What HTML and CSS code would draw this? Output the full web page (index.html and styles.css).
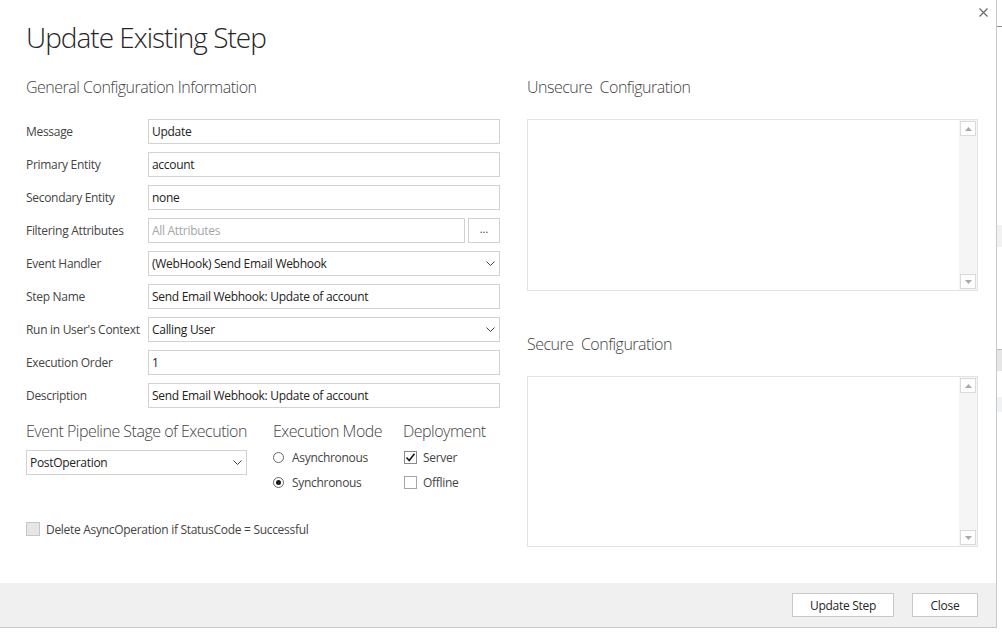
FILE: index.html
```html
<!DOCTYPE html>
<html lang="en">
<head>
<meta charset="UTF-8">
<title>Update Existing Step</title>
<link rel="stylesheet" href="styles.css">
</head>
<body>
<div class="page">
    <div class="dialog">
        <div class="dialog-head">
            <h1 class="title">Update Existing Step</h1>
            <button class="close-x" type="button" title="Close">
                <svg width="9" height="9" viewBox="0 0 9 9"><path d="M0.5 0.5L8.5 8.5M8.5 0.5L0.5 8.5" stroke="#6a6a6a" stroke-width="1.2" fill="none"/></svg>
            </button>
        </div>

        <div class="dialog-body">
            <div class="col-left">
                <h2 class="section">General Configuration Information</h2>

                <div class="row"><label>Message</label><input class="field" type="text" value="Update"></div>
                <div class="row"><label>Primary Entity</label><input class="field" type="text" value="account"></div>
                <div class="row"><label>Secondary Entity</label><input class="field" type="text" value="none"></div>
                <div class="row">
                    <label>Filtering Attributes</label>
                    <input class="field" type="text" placeholder="All Attributes">
                    <button class="dots" type="button">...</button>
                </div>
                <div class="row">
                    <label>Event Handler</label>
                    <div class="field select"><span>(WebHook) Send Email Webhook</span>
                        <svg width="9" height="5" viewBox="0 0 9 5"><path d="M0.5 0.5L4.5 4.5L8.5 0.5" stroke="#444" fill="none"/></svg>
                    </div>
                </div>
                <div class="row"><label>Step Name</label><input class="field" type="text" value="Send Email Webhook: Update of account"></div>
                <div class="row">
                    <label>Run in User's Context</label>
                    <div class="field select"><span>Calling User</span>
                        <svg width="9" height="5" viewBox="0 0 9 5"><path d="M0.5 0.5L4.5 4.5L8.5 0.5" stroke="#444" fill="none"/></svg>
                    </div>
                </div>
                <div class="row"><label>Execution Order</label><input class="field" type="text" value="1"></div>
                <div class="row"><label>Description</label><input class="field" type="text" value="Send Email Webhook: Update of account"></div>

                <div class="stage">
                    <div>
                        <h3 class="sub">Event Pipeline Stage of Execution</h3>
                        <div class="field select stage-select"><span>PostOperation</span>
                            <svg width="9" height="5" viewBox="0 0 9 5"><path d="M0.5 0.5L4.5 4.5L8.5 0.5" stroke="#444" fill="none"/></svg>
                        </div>
                    </div>
                    <div>
                        <h3 class="sub">Execution Mode</h3>
                        <div class="opts">
                            <div class="opt"><span class="radio"></span>Asynchronous</div>
                            <div class="opt"><span class="radio on"></span>Synchronous</div>
                        </div>
                    </div>
                    <div>
                        <h3 class="sub">Deployment</h3>
                        <div class="opts">
                            <div class="opt"><span class="check">
                                <svg width="11" height="11" viewBox="0 0 11 11"><path d="M1.5 5.5L4.2 8.5L9.5 1.8" stroke="#1a1a1a" stroke-width="1.6" fill="none"/></svg>
                            </span>Server</div>
                            <div class="opt"><span class="check off"></span>Offline</div>
                        </div>
                    </div>
                </div>

                <div class="delete-row"><span class="check disabled"></span>Delete AsyncOperation if StatusCode = Successful</div>
            </div>

            <div class="col-right">
                <h2 class="section">Unsecure&nbsp; Configuration</h2>
                <div class="config-box">
                    <textarea class="config-text"></textarea>
                    <div class="scroll">
                        <span class="scroll-btn"><svg width="7" height="4" viewBox="0 0 7 4"><path d="M0 4L3.5 0L7 4Z" fill="#a9a9a9"/></svg></span>
                        <span class="scroll-btn"><svg width="7" height="4" viewBox="0 0 7 4"><path d="M0 0L3.5 4L7 0Z" fill="#a9a9a9"/></svg></span>
                    </div>
                </div>

                <h2 class="section secure">Secure&nbsp; Configuration</h2>
                <div class="config-box short">
                    <textarea class="config-text"></textarea>
                    <div class="scroll">
                        <span class="scroll-btn"><svg width="7" height="4" viewBox="0 0 7 4"><path d="M0 4L3.5 0L7 4Z" fill="#a9a9a9"/></svg></span>
                        <span class="scroll-btn"><svg width="7" height="4" viewBox="0 0 7 4"><path d="M0 0L3.5 4L7 0Z" fill="#a9a9a9"/></svg></span>
                    </div>
                </div>
            </div>
        </div>

        <div class="dialog-foot">
            <button class="btn btn-update" type="button">Update Step</button>
            <button class="btn btn-close" type="button">Close</button>
        </div>
    </div>

    <!-- bit of the page behind the dialog -->
    <div class="edge">
        <div class="edge-tick"></div>
        <div class="edge-block"></div>
        <div class="edge-line"></div>
        <div class="edge-dark"></div>
        <div class="edge-light"></div>
    </div>
</div>
</body>
</html>
```

FILE: styles.css
```css
body {
    margin: 0;
    font-family: "Open Sans", "Segoe UI", sans-serif;
    letter-spacing: -0.3px;
    color: #444;
    background-color: #fff;
}

.page {
    display: flex;
    height: 634px;
}

.dialog {
    width: 997px;
    height: 628px;
    box-sizing: border-box;
    border-right: 1px solid #c8c8c8;
    border-bottom: 1px solid #c8c8c8;
    display: flex;
    flex-direction: column;
}

.dialog-head {
    display: flex;
    justify-content: space-between;
    padding: 0 8px 0 26px;
}

.title {
    margin: 19px 0 0;
    font-size: 28px;
    font-weight: 300;
    line-height: 36px;
    letter-spacing: -1px;
    color: #262626;
}

.close-x {
    margin-top: 8px;
    width: 9px;
    height: 9px;
    padding: 0;
    border: none;
    background: none;
    line-height: 0;
}

.dialog-body {
    flex: 1;
    display: flex;
    gap: 27px;
    padding: 21px 18px 0 26px;
}

.col-left {
    width: 474px;
}

.col-right {
    width: 451px;
}

.section {
    margin: 0 0 21px;
    font-size: 16px;
    font-weight: 300;
    line-height: 22px;
    letter-spacing: -0.5px;
    color: #444;
}

.section.secure {
    margin-top: 42px;
}

/* form rows */
.row {
    display: flex;
    align-items: center;
    height: 25px;
    margin-bottom: 8px;
}

.row label {
    width: 122px;
    flex-shrink: 0;
    font-size: 12px;
    color: #444;
}

.field {
    flex: 1;
    min-width: 0;
    height: 25px;
    box-sizing: border-box;
    margin: 0;
    padding: 0 3px 1px;
    border: 1px solid #d2d2d2;
    font-family: inherit;
    font-size: 12px;
    letter-spacing: -0.3px;
    color: #222;
    background-color: #fff;
    outline: none;
}

.field::placeholder {
    color: #a6a6a6;
}

.dots {
    width: 32px;
    height: 25px;
    margin-left: 3px;
    padding: 0 0 4px;
    border: 1px solid #d2d2d2;
    background-color: #fff;
    font-family: inherit;
    font-size: 11px;
    color: #444;
}

.select {
    display: flex;
    align-items: center;
    justify-content: space-between;
    padding-right: 4px;
}

/* stage / mode / deployment */
.stage {
    display: grid;
    grid-template-columns: 247px 130px 1fr;
    margin-top: 12px;
}

.sub {
    margin: 0;
    font-size: 16px;
    font-weight: 300;
    line-height: 22px;
    letter-spacing: -0.5px;
    color: #444;
}

.stage-select {
    width: 221px;
    flex: none;
    margin-top: 8px;
}

.opts {
    margin-top: 3px;
}

.opt {
    display: flex;
    align-items: center;
    height: 25px;
    font-size: 12px;
    color: #444;
}

.radio {
    width: 11px;
    height: 11px;
    box-sizing: border-box;
    margin-right: 8px;
    border: 1px solid #666;
    border-radius: 50%;
    display: flex;
    align-items: center;
    justify-content: center;
}

.radio.on::after {
    content: "";
    width: 5px;
    height: 5px;
    border-radius: 50%;
    background-color: #1a1a1a;
}

.check {
    width: 13px;
    height: 13px;
    box-sizing: border-box;
    margin: 0 6px 0 1px;
    border: 1px solid #8a8a8a;
    display: flex;
    align-items: center;
    justify-content: center;
    background-color: #fff;
}

.check.off {
    border-color: #a6a6a6;
}

.check.disabled {
    width: 14px;
    height: 14px;
    margin: 0 6px 0 0;
    border-color: #c6c6c6;
    background-color: #e6e6e6;
}

.delete-row {
    display: flex;
    align-items: center;
    height: 26px;
    margin-top: 21px;
    font-size: 12px;
    color: #444;
}

/* configuration text boxes */
.config-box {
    display: flex;
    height: 172px;
    box-sizing: border-box;
    border: 1px solid #e3e3e3;
}

.config-box.short {
    height: 171px;
}

.config-text {
    flex: 1;
    border: none;
    resize: none;
    outline: none;
    font-family: inherit;
}

.scroll {
    width: 18px;
    box-sizing: border-box;
    padding: 1px;
    background-color: #f5f5f5;
    display: flex;
    flex-direction: column;
    justify-content: space-between;
}

.scroll-btn {
    height: 15px;
    box-sizing: border-box;
    border: 1px solid #dadada;
    background-color: #fdfdfd;
    display: flex;
    align-items: center;
    justify-content: center;
}

/* footer */
.dialog-foot {
    height: 44px;
    box-sizing: border-box;
    padding: 10px 18px 0;
    display: flex;
    justify-content: flex-end;
    align-items: flex-start;
    gap: 18px;
    background-color: #f0f0f0;
}

.btn {
    height: 24px;
    padding: 0;
    border: 1px solid #c9c9c9;
    background-color: #fff;
    font-family: inherit;
    font-size: 12px;
    letter-spacing: -0.3px;
    color: #262626;
}

.btn-update {
    width: 102px;
}

.btn-close {
    width: 66px;
}

/* page behind the dialog */
.edge {
    flex: 1;
    display: flex;
    flex-direction: column;
}

.edge-tick {
    margin-top: 26px;
    height: 1px;
    background-color: #8c8c8c;
}

.edge-block {
    margin-top: 198px;
    height: 22px;
    background-color: #f2f2f2;
}

.edge-line {
    margin-top: 102px;
    height: 1px;
    background-color: #bdbdbd;
}

.edge-dark {
    height: 21px;
    background-color: #e6e6e6;
}

.edge-light {
    margin-top: 26px;
    height: 15px;
    background-color: #f0f2f6;
}
```
